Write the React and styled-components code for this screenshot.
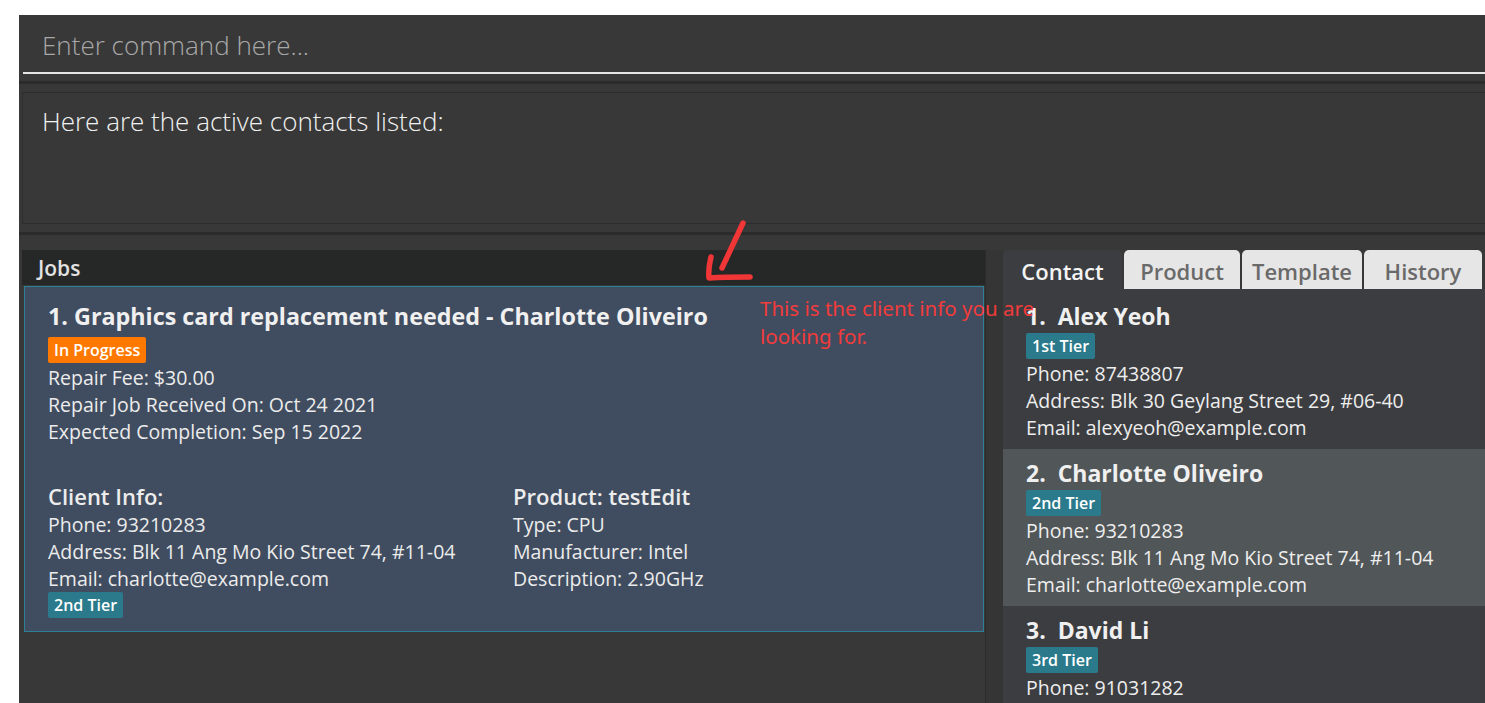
import styled, { createGlobalStyle } from 'styled-components';

const GlobalStyle = createGlobalStyle`
	html, body {
		margin: 0;
		padding: 0;
		background: #ffffff;
		overflow: hidden;
	}
	body {
		font-family: 'Open Sans', 'Noto Sans', sans-serif;
	}
`;

const StyledApp = styled.div`
	position: relative;
	margin: 15px 0 0 19px;
	height: 688px;
	background: #383838;
	display: flex;
	flex-direction: column;
	overflow: hidden;
	color: #eeeeee;
`;

const CommandBox = styled.div`
	height: 59px;
	padding-left: 4px;
	box-sizing: border-box;
	input {
		width: 100%;
		height: 59px;
		box-sizing: border-box;
		background: transparent;
		border: none;
		border-bottom: 2px solid #e6e6e6;
		padding: 3px 0 0 19px;
		font-family: 'Open Sans', sans-serif;
		font-size: 26px;
		font-weight: 300;
		color: #eeeeee;
		outline: none;
	}
	input::placeholder {
		color: #a8a8a8;
	}
`;

const Divider = styled.div`
	height: ${(p) => p.$height}px;
	padding-top: ${(p) => p.$offset}px;
	box-sizing: border-box;
	&::before {
		content: '';
		display: block;
		height: 3px;
		background: #2b2b2b;
	}
`;

const ResultBox = styled.div`
	height: 132px;
	margin-left: 3px;
	box-sizing: border-box;
	border: 1px solid #2d2d2d;
	border-right: none;
	padding: 12px 0 0 19px;
	font-size: 26px;
	font-weight: 300;
	line-height: 32px;
	color: #f2f2f2;
`;

const Panels = styled.div`
	flex: 1;
	display: flex;
	padding-left: 3px;
	min-height: 0;
`;

const JobsPanel = styled.section`
	width: 963px;
	display: flex;
	flex-direction: column;
	border-right: 1px solid #2c2c2c;
`;

const PanelHeader = styled.div`
	height: 35px;
	background: #262727;
	padding-left: 16px;
	font-size: 21px;
	font-weight: 600;
	line-height: 36px;
	color: #e2e2e2;
`;

const JobCard = styled.div`
	margin: 1px 1px 0 2px;
	border: 1px solid #2b8296;
	background: #404c5f;
	padding: 13px 0 12px 23px;
	color: #ececec;
`;

const Title = styled.div`
	font-size: ${(p) => p.$size || 23}px;
	font-weight: 700;
	line-height: 32px;
	white-space: pre;
	color: #f0f0f0;
`;

const Badge = styled.span`
	display: inline-block;
	height: 26px;
	padding: 0 6px;
	border-radius: 2px;
	background: ${(p) => (p.$kind === 'status' ? '#ff7900' : '#2b7a8c')};
	color: #ffffff;
	font-size: 16px;
	font-weight: 600;
	line-height: 26px;
	margin-top: ${(p) => p.$top || 0}px;
	margin-bottom: 1px;
`;

const Line = styled.div`
	font-size: 19.5px;
	line-height: 27px;
`;

const InfoGrid = styled.div`
	display: grid;
	grid-template-columns: 465px 1fr;
	margin-top: 36px;
	.heading {
		font-size: 22px;
		font-weight: 600;
		line-height: 30px;
	}
`;

const Column = styled.div`
	display: flex;
	flex-direction: column;
	align-items: flex-start;
`;

const Gutter = styled.div`
	width: 17px;
	background: #353535;
`;

const ContactPanel = styled.section`
	flex: 1;
	display: flex;
	flex-direction: column;
	background: #3a3a3a;
	min-height: 0;
`;

const TabRow = styled.div`
	display: flex;
	height: 39px;
	gap: 2px;
	background: #383838;
`;

const Tab = styled.div`
	width: ${(p) => p.$width}px;
	border-radius: 5px 5px 0 0;
	background: ${(p) => (p.$active ? '#3c3d40' : '#e6e6e6')};
	color: ${(p) => (p.$active ? '#f4f4f4' : '#6a6a6a')};
	font-size: 22px;
	font-weight: 600;
	line-height: 43px;
	text-align: center;
`;

const ContactList = styled.div`
	flex: 1;
	background: #3c3d40;
	padding-top: 3px;
	overflow: hidden;
`;

const ContactItem = styled.div`
	height: 157px;
	box-sizing: border-box;
	padding: 8px 0 0 23px;
	display: flex;
	flex-direction: column;
	align-items: flex-start;
	background: ${(p) => (p.$selected ? '#515658' : 'transparent')};
`;

const Note = styled.div`
	position: absolute;
	left: 741px;
	top: 279px;
	font-family: 'Noto Sans', 'Open Sans', sans-serif;
	font-size: 20.5px;
	line-height: 28px;
	color: #f23b3b;
	white-space: pre;
`;

const Arrow = styled.svg`
	position: absolute;
	left: 662px;
	top: 200px;
`;

const contacts = [
	{ name: 'Alex Yeoh', tier: '1st Tier', phone: '87438807', address: 'Blk 30 Geylang Street 29, #06-40', email: 'alexyeoh@example.com' },
	{ name: 'Charlotte Oliveiro', tier: '2nd Tier', phone: '93210283', address: 'Blk 11 Ang Mo Kio Street 74, #11-04', email: 'charlotte@example.com' },
	{ name: 'David Li', tier: '3rd Tier', phone: '91031282', address: 'Blk 436 Serangoon Gardens Street 26, #16-43', email: 'lidavid@example.com' },
];

const tabs = [
	{ label: 'Contact', width: 119 },
	{ label: 'Product', width: 116 },
	{ label: 'Template', width: 120 },
	{ label: 'History', width: 118 },
];

export default function App() {
	return (
		<>
			<GlobalStyle />
			<StyledApp>
				<CommandBox>
					<input placeholder="Enter command here..." />
				</CommandBox>
				<Divider $height={18} $offset={7} />
				<ResultBox>Here are the active contacts listed:</ResultBox>
				<Divider $height={26} $offset={8} />
				<Panels>
					<JobsPanel>
						<PanelHeader>Jobs</PanelHeader>
						<JobCard>
							<Title $size={23.3}>1. Graphics card replacement needed - Charlotte Oliveiro</Title>
							<Badge $kind="status" $top={5}>In Progress</Badge>
							<Line>Repair Fee: $30.00</Line>
							<Line>Repair Job Received On: Oct 24 2021</Line>
							<Line>Expected Completion: Sep 15 2022</Line>
							<InfoGrid>
								<Column>
									<div className="heading">Client Info:</div>
									<Line>Phone: 93210283</Line>
									<Line>Address: Blk 11 Ang Mo Kio Street 74, #11-04</Line>
									<Line>Email: charlotte@example.com</Line>
									<Badge>2nd Tier</Badge>
								</Column>
								<Column>
									<div className="heading">Product: testEdit</div>
									<Line>Type: CPU</Line>
									<Line>Manufacturer: Intel</Line>
									<Line>Description: 2.90GHz</Line>
								</Column>
							</InfoGrid>
						</JobCard>
					</JobsPanel>
					<Gutter />
					<ContactPanel>
						<TabRow>
							{tabs.map((t, i) => (
								<Tab key={t.label} $width={t.width} $active={i === 0}>
									{t.label}
								</Tab>
							))}
						</TabRow>
						<ContactList>
							{contacts.map((c, i) => (
								<ContactItem key={c.name} $selected={i === 1}>
									<Title>{`${i + 1}.  ${c.name}`}</Title>
									<Badge $top={1}>{c.tier}</Badge>
									<Line>Phone: {c.phone}</Line>
									<Line>Address: {c.address}</Line>
									<Line>Email: {c.email}</Line>
								</ContactItem>
							))}
						</ContactList>
					</ContactPanel>
				</Panels>
				<Arrow width="80" height="80" viewBox="0 0 80 80">
					<path
						d="M62 8 L41 53 M30 42 Q27 54 28 63 Q44 62 69 62"
						fill="none"
						stroke="#f03636"
						strokeWidth="5.5"
						strokeLinecap="round"
						strokeLinejoin="round"
					/>
				</Arrow>
				<Note>{'This is the client info you are\nlooking for.'}</Note>
			</StyledApp>
		</>
	);
}
